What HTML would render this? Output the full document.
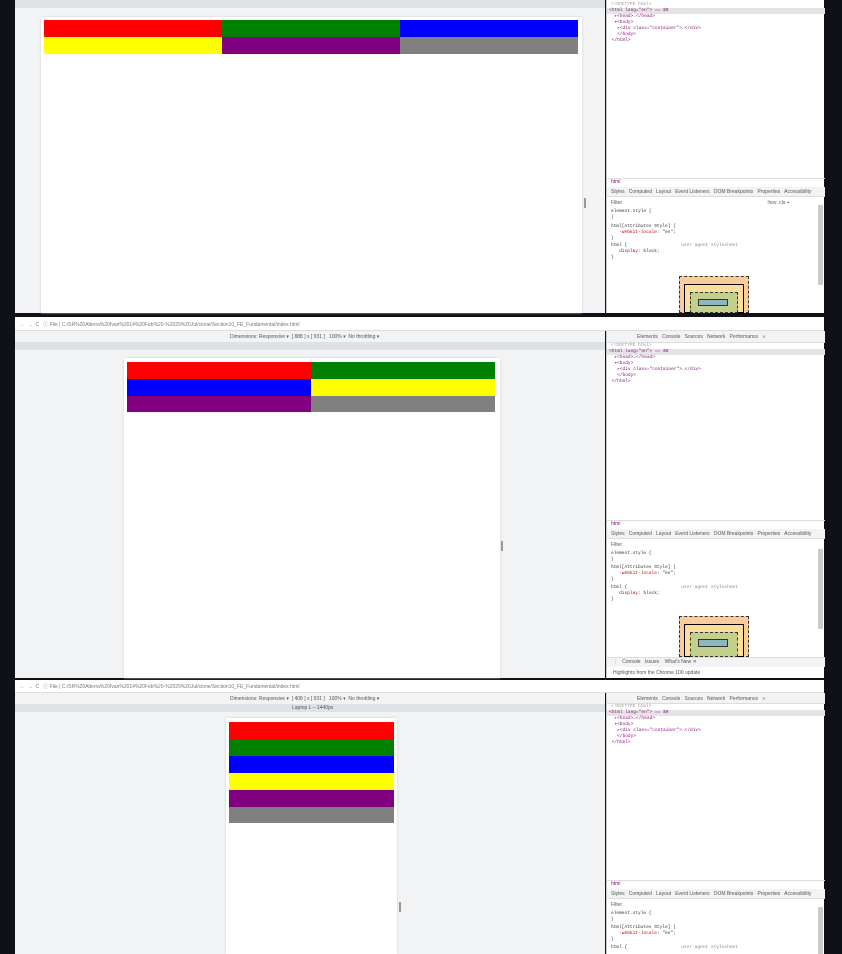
<!DOCTYPE html>
<html><head><meta charset="utf-8"><style>
*{margin:0;padding:0;box-sizing:border-box}
body{width:842px;height:954px;background:#0f1117;position:relative;overflow:hidden;font-family:"Liberation Sans",sans-serif}
.a{position:absolute}
.vp{background:#f1f3f4}
.pg{background:#fff;box-shadow:0 0 2px #ccc}
.t{font-size:5px;color:#555;white-space:nowrap;position:absolute}
.dev{background:#fff;border-left:1px solid #ccc}
.code{font-family:"Liberation Mono",monospace;font-size:4.5px;color:#881280;line-height:6px;white-space:pre}
.r{background:#f00}.g{background:#008000}.b{background:#00f}.y{background:#ff0}.p{background:#800080}.gr{background:#808080}
.bar{background:#f1f3f4;border-bottom:1px solid #ddd}
.ruler{background:#dee1e6}
</style></head><body>

<!-- Panel 1 -->
<div class="a vp" style="left:15px;top:0;width:590px;height:313px"></div>
<div class="a ruler" style="left:15px;top:0;width:590px;height:8px"></div>
<div class="a pg" style="left:41px;top:17px;width:541px;height:296px"></div>
<div class="a r" style="left:44px;top:20px;width:178px;height:17px"></div>
<div class="a g" style="left:222px;top:20px;width:178px;height:17px"></div>
<div class="a b" style="left:400px;top:20px;width:178px;height:17px"></div>
<div class="a y" style="left:44px;top:37px;width:178px;height:17px"></div>
<div class="a p" style="left:222px;top:37px;width:178px;height:17px"></div>
<div class="a gr" style="left:400px;top:37px;width:178px;height:17px"></div>
<div class="a" style="left:584px;top:198px;width:2px;height:10px;background:#999"></div>
<div class="a dev" style="left:606px;top:0;width:218px;height:313px">
 <div class="code" style="position:absolute;left:4px;top:2px;color:#999">&lt;!DOCTYPE html&gt;</div>
 <div style="position:absolute;left:0;top:8px;width:218px;height:6px;background:#e4e4e4"></div>
 <div class="code" style="position:absolute;left:2px;top:8px">&lt;html lang="en"&gt; == $0
  ▸&lt;head&gt;…&lt;/head&gt;
  ▾&lt;body&gt;
   ▸&lt;div class="container"&gt;…&lt;/div&gt;
   &lt;/body&gt;
 &lt;/html&gt;</div>
 <div style="position:absolute;left:0;top:178px;width:218px;height:1px;background:#ddd"></div>
 <div class="t" style="left:4px;top:179px;color:#881280">html</div>
 <div style="position:absolute;left:0;top:187px;width:218px;height:10px;background:#f1f3f4;border-bottom:1px solid #ddd"></div>
 <div class="t" style="left:4px;top:189px">Styles &nbsp; Computed &nbsp; Layout &nbsp; Event Listeners &nbsp; DOM Breakpoints &nbsp; Properties &nbsp; Accessibility</div>
 <div class="t" style="left:4px;top:200px">Filter</div>
 <div class="t" style="left:160px;top:200px">:hov .cls + </div>
 <div class="code" style="position:absolute;left:4px;top:209px;color:#333">element.style {
}</div>
 <div class="code" style="position:absolute;left:4px;top:224px;color:#333">html[Attributes Style] {
   <span style="color:#c80000">-webkit-locale</span>: "en";
}</div>
 <div class="code" style="position:absolute;left:4px;top:243px;color:#333">html {                    <span style="color:#888">user agent stylesheet</span>
   <span style="color:#c80000">display</span>: block;
}</div>
 <div style="position:absolute;left:72px;top:276px;width:70px;height:37px;background:#f9cc9d;border:1px dashed #333"></div>
 <div style="position:absolute;left:77px;top:284px;width:60px;height:29px;background:#fddd9b;border:1px solid #000"></div>
 <div style="position:absolute;left:83px;top:292px;width:48px;height:21px;background:#c3d08b;border:1px dashed #333"></div>
 <div style="position:absolute;left:91px;top:299px;width:30px;height:7px;background:#8cb6c0;border:1px solid #333"></div>
 <div style="position:absolute;left:211px;top:205px;width:5px;height:80px;background:#ccc"></div>
</div>

<!-- Panel 2 -->
<div class="a bar" style="left:15px;top:317px;width:809px;height:14px;background:#fff"></div>
<div class="t" style="left:20px;top:321px;color:#777">←&nbsp; →&nbsp; C &nbsp; ⓘ File | C:/SR%20Alterra%20Ivan%2014%20Feb%20-%2029%20Jul/clone/Section10_FE_Fundamental/index.html</div>
<div class="a vp" style="left:15px;top:331px;width:590px;height:347px"></div>
<div class="t" style="left:230px;top:334px">Dimensions: Responsive ▾ &nbsp;[ 888 ] x [ 931 ] &nbsp; 100% ▾ &nbsp;No throttling ▾</div>
<div class="a ruler" style="left:15px;top:342px;width:590px;height:8px"></div>
<div class="a pg" style="left:124px;top:358px;width:376px;height:320px"></div>
<div class="a r" style="left:127px;top:362px;width:184px;height:17px"></div>
<div class="a g" style="left:311px;top:362px;width:184px;height:17px"></div>
<div class="a b" style="left:127px;top:379px;width:184px;height:17px"></div>
<div class="a y" style="left:311px;top:379px;width:184px;height:17px"></div>
<div class="a p" style="left:127px;top:396px;width:184px;height:16px"></div>
<div class="a gr" style="left:311px;top:396px;width:184px;height:16px"></div>
<div class="a" style="left:501px;top:541px;width:2px;height:10px;background:#999"></div>
<div class="a dev" style="left:606px;top:331px;width:218px;height:347px">
 <div style="position:absolute;left:0;top:0;width:218px;height:12px;background:#f1f3f4;border-bottom:1px solid #ddd"></div>
 <div class="t" style="left:30px;top:3px">Elements &nbsp; Console &nbsp; Sources &nbsp; Network &nbsp; Performance &nbsp; »</div>
 <div class="code" style="position:absolute;left:4px;top:12px;color:#999">&lt;!DOCTYPE html&gt;</div>
 <div style="position:absolute;left:0;top:18px;width:218px;height:6px;background:#e4e4e4"></div>
 <div class="code" style="position:absolute;left:2px;top:18px">&lt;html lang="en"&gt; == $0
  ▸&lt;head&gt;…&lt;/head&gt;
  ▾&lt;body&gt;
   ▸&lt;div class="container"&gt;…&lt;/div&gt;
   &lt;/body&gt;
 &lt;/html&gt;</div>
 <div style="position:absolute;left:0;top:189px;width:218px;height:1px;background:#ddd"></div>
 <div class="t" style="left:4px;top:190px;color:#881280">html</div>
 <div style="position:absolute;left:0;top:198px;width:218px;height:10px;background:#f1f3f4;border-bottom:1px solid #ddd"></div>
 <div class="t" style="left:4px;top:200px">Styles &nbsp; Computed &nbsp; Layout &nbsp; Event Listeners &nbsp; DOM Breakpoints &nbsp; Properties &nbsp; Accessibility</div>
 <div class="t" style="left:4px;top:211px">Filter</div>
 <div class="code" style="position:absolute;left:4px;top:220px;color:#333">element.style {
}</div>
 <div class="code" style="position:absolute;left:4px;top:234px;color:#333">html[Attributes Style] {
   <span style="color:#c80000">-webkit-locale</span>: "en";
}</div>
 <div class="code" style="position:absolute;left:4px;top:254px;color:#333">html {                    <span style="color:#888">user agent stylesheet</span>
   <span style="color:#c80000">display</span>: block;
}</div>
 <div style="position:absolute;left:72px;top:285px;width:70px;height:41px;background:#f9cc9d;border:1px dashed #333"></div>
 <div style="position:absolute;left:77px;top:293px;width:60px;height:33px;background:#fddd9b;border:1px solid #000"></div>
 <div style="position:absolute;left:83px;top:301px;width:48px;height:25px;background:#c3d08b;border:1px dashed #333"></div>
 <div style="position:absolute;left:91px;top:308px;width:30px;height:8px;background:#8cb6c0;border:1px solid #333"></div>
 <div style="position:absolute;left:0;top:326px;width:218px;height:10px;background:#f1f3f4;border-top:1px solid #ddd"></div>
 <div class="t" style="left:6px;top:328px">⋮ &nbsp; Console &nbsp; Issues &nbsp;&nbsp; What's New ✕</div>
 <div class="t" style="left:6px;top:339px">Highlights from the Chrome 100 update</div>
 <div style="position:absolute;left:211px;top:218px;width:5px;height:80px;background:#ccc"></div>
</div>

<!-- Panel 3 -->
<div class="a bar" style="left:15px;top:680px;width:809px;height:13px;background:#fff"></div>
<div class="t" style="left:20px;top:683px;color:#777">←&nbsp; →&nbsp; C &nbsp; ⓘ File | C:/SR%20Alterra%20Ivan%2014%20Feb%20-%2029%20Jul/clone/Section10_FE_Fundamental/index.html</div>
<div class="a vp" style="left:15px;top:693px;width:590px;height:261px"></div>
<div class="t" style="left:230px;top:696px">Dimensions: Responsive ▾ &nbsp;[ 408 ] x [ 931 ] &nbsp; 100% ▾ &nbsp;No throttling ▾</div>
<div class="a ruler" style="left:15px;top:704px;width:590px;height:8px"></div>
<div class="t" style="left:292px;top:705px">Laptop L – 1440px</div>
<div class="a pg" style="left:226px;top:718px;width:171px;height:236px"></div>
<div class="a r" style="left:229px;top:722px;width:165px;height:17px"></div>
<div class="a g" style="left:229px;top:739px;width:165px;height:17px"></div>
<div class="a b" style="left:229px;top:756px;width:165px;height:17px"></div>
<div class="a y" style="left:229px;top:773px;width:165px;height:17px"></div>
<div class="a p" style="left:229px;top:790px;width:165px;height:17px"></div>
<div class="a gr" style="left:229px;top:807px;width:165px;height:16px"></div>
<div class="a" style="left:399px;top:902px;width:2px;height:10px;background:#999"></div>
<div class="a dev" style="left:606px;top:693px;width:218px;height:261px">
 <div style="position:absolute;left:0;top:0;width:218px;height:11px;background:#f1f3f4;border-bottom:1px solid #ddd"></div>
 <div class="t" style="left:30px;top:3px">Elements &nbsp; Console &nbsp; Sources &nbsp; Network &nbsp; Performance &nbsp; »</div>
 <div class="code" style="position:absolute;left:4px;top:11px;color:#999">&lt;!DOCTYPE html&gt;</div>
 <div style="position:absolute;left:0;top:17px;width:218px;height:6px;background:#e4e4e4"></div>
 <div class="code" style="position:absolute;left:2px;top:17px">&lt;html lang="en"&gt; == $0
  ▸&lt;head&gt;…&lt;/head&gt;
  ▾&lt;body&gt;
   ▸&lt;div class="container"&gt;…&lt;/div&gt;
   &lt;/body&gt;
 &lt;/html&gt;</div>
 <div style="position:absolute;left:0;top:187px;width:218px;height:1px;background:#ddd"></div>
 <div class="t" style="left:4px;top:188px;color:#881280">html</div>
 <div style="position:absolute;left:0;top:196px;width:218px;height:10px;background:#f1f3f4;border-bottom:1px solid #ddd"></div>
 <div class="t" style="left:4px;top:198px">Styles &nbsp; Computed &nbsp; Layout &nbsp; Event Listeners &nbsp; DOM Breakpoints &nbsp; Properties &nbsp; Accessibility</div>
 <div class="t" style="left:4px;top:209px">Filter</div>
 <div class="code" style="position:absolute;left:4px;top:218px;color:#333">element.style {
}</div>
 <div class="code" style="position:absolute;left:4px;top:232px;color:#333">html[Attributes Style] {
   <span style="color:#c80000">-webkit-locale</span>: "en";
}</div>
 <div class="code" style="position:absolute;left:4px;top:252px;color:#333">html {                    <span style="color:#888">user agent stylesheet</span></div>
 <div style="position:absolute;left:211px;top:214px;width:5px;height:47px;background:#ccc"></div>
</div>
</body></html>
